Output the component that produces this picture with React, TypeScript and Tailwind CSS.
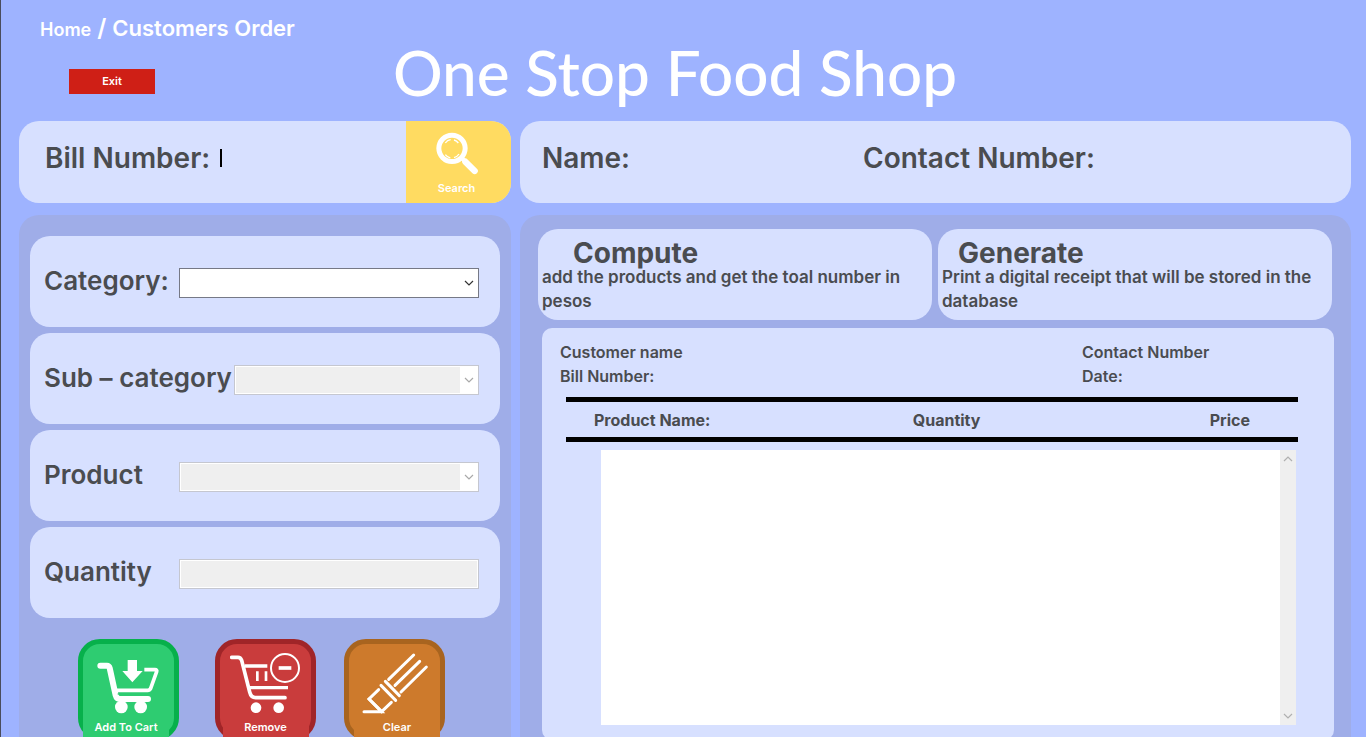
import React, { useState } from "react";

const ink = "text-[#4a4c50]";

function MagnifierIcon() {
  return (
    <svg viewBox="100 48 144 135" className="h-[45px] w-12 shrink-0" fill="none" stroke="#fff" aria-hidden="true">
      <circle cx="157" cy="100" r="39.5" strokeWidth="15" />
      <path d="M137 84q6-9 16-10M163 75q8 2 13 9M178 117q-6 9-15 11M152 129q-9-2-15-10" strokeWidth="4" />
      <path d="M186 129l11 11" strokeWidth="12" />
      <path d="M197 140l28 28" strokeWidth="19" strokeLinecap="round" />
    </svg>
  );
}

function AddCartIcon() {
  return (
    <svg viewBox="98 81 216 189" className="h-[63px] w-[72px] shrink-0" fill="none" stroke="#fff" strokeLinejoin="round" aria-hidden="true">
      <path d="M120 122h20q6 0 8 7l18 82q3 11 12 11h85" strokeWidth="18" strokeLinecap="round" />
      <path d="M170 196h92q6 0 9-6l18-50q2-6-5-6h-32" strokeWidth="11" />
      <path d="M172 207h94" strokeWidth="4" stroke="#2ecc71" />
      <path d="M202 105h28v33h17l-31 34-30-34h16z" fill="#fff" stroke="none" />
      <circle cx="183" cy="246" r="19" fill="#fff" stroke="none" />
      <circle cx="241" cy="246" r="19" fill="#fff" stroke="none" />
    </svg>
  );
}

function RemoveCartIcon() {
  return (
    <svg viewBox="510 81 216 189" className="h-[63px] w-[72px] shrink-0" fill="none" stroke="#fff" aria-hidden="true">
      <path d="M515 97h19q8 0 11 9l24 95q4 17 18 17h88" strokeWidth="11" strokeLinecap="round" />
      <path d="M554 123h68M569 188h115" strokeWidth="10" />
      <path d="M592 139v29M618 139v29" strokeWidth="8" />
      <circle cx="675" cy="129" r="42" strokeWidth="6" />
      <path d="M656 129h38" strokeWidth="11" />
      <circle cx="588" cy="248" r="16" fill="#fff" stroke="none" />
      <circle cx="656" cy="248" r="16" fill="#fff" stroke="none" />
    </svg>
  );
}

function BrushIcon() {
  return (
    <svg viewBox="897 81 216 189" className="h-[63px] w-[72px] shrink-0" fill="none" stroke="#fff" strokeWidth="9" strokeLinecap="round" aria-hidden="true">
      <path d="M986 163l75-73M1005 181l74-72M1023 201l76-75" />
      <path d="M963 181l44 45M976 169l42 43" />
      <path d="M956 194l-29 28 38 38 29-28" />
      <path d="M927 222l38 38h-53" />
    </svg>
  );
}

function ChevronIcon({ className }: { className: string }) {
  return (
    <svg viewBox="0 0 10 6" className={className} fill="none" stroke="currentColor" aria-hidden="true">
      <path d="M1 1l4 4 4-4" strokeWidth="1.2" />
    </svg>
  );
}

function FieldCard({ id, label, children }: { id: string; label: string; children: React.ReactNode }) {
  return (
    <div className="flex h-[91px] items-start rounded-[20px] bg-[#d7e0ff] pt-[29px] pr-[21px] pl-[14px]">
      <label htmlFor={id} className={`min-w-[135px] shrink-0 pr-0.5 text-[26px] leading-8 font-semibold whitespace-nowrap ${ink}`}>
        {label}
      </label>
      <div className="min-w-0 flex-1 pt-[3px]">{children}</div>
    </div>
  );
}

function SelectField({ id, disabled = false }: { id: string; disabled?: boolean }) {
  return (
    <div className="relative">
      <select
        id={id}
        disabled={disabled}
        className={
          disabled
            ? "block h-[30px] w-full appearance-none border border-[#c5c7d0] bg-[#efefef] opacity-100 shadow-[inset_0_0_0_1px_#fff]"
            : "block h-[30px] w-full appearance-none border border-[#767986] bg-white"
        }
      />
      <span
        className={
          disabled
            ? "pointer-events-none absolute inset-y-px right-px flex w-[18px] items-center justify-center bg-white text-[#a9a9a9]"
            : "pointer-events-none absolute inset-y-px right-px flex w-[18px] items-center justify-center bg-white text-[#333]"
        }
      >
        <ChevronIcon className="h-1.5 w-2.5" />
      </span>
    </div>
  );
}

function ActionButton({
  label,
  icon,
  frame,
  plate,
}: {
  label: string;
  icon: React.ReactNode;
  frame: string;
  plate: string;
}) {
  return (
    <button type="button" className={`flex h-[101px] w-[101px] shrink-0 flex-col items-center justify-start rounded-[22px] border-[5px] pt-2 text-white ${frame}`}>
      {icon}
      <span className={`block h-[25px] w-[86px] shrink-0 text-center text-[11px] leading-6 font-semibold ${plate}`}>{label}</span>
    </button>
  );
}

function InfoCard({ title, indent, text }: { title: string; indent: string; text: string }) {
  return (
    <section className="h-[91px] flex-1 rounded-[20px] bg-[#d7e0ff] px-1 pt-2">
      <h2 className={`text-[28px] leading-8 font-bold ${indent}`}>{title}</h2>
      <p className="-mt-1 text-[17px] leading-6 font-semibold">{text}</p>
    </section>
  );
}

export default function App() {
  const [bill, setBill] = useState("");
  return (
    <div className={`flex h-screen flex-col overflow-hidden border-l border-[#4a4c5c] bg-[#9eb3ff] font-['Inter','Open_Sans',sans-serif] ${ink}`}>
      <header className="grid h-[121px] shrink-0 grid-cols-[1fr_auto_1fr] pr-14 pl-[39px] text-white">
        <div className="pt-3">
          <nav className="flex h-8 items-baseline font-semibold whitespace-nowrap">
            <a href="#home" className="text-lg leading-8">Home</a>
            <span className="px-1.5 text-2xl leading-8">/</span>
            <a href="#orders" className="text-[22px] leading-8">Customers Order</a>
          </nav>
          <button type="button" className="mt-[25px] ml-[29px] block h-[25px] w-[86px] bg-[#cf1f16] text-[11px] font-semibold">
            Exit
          </button>
        </div>
        <h1 className="pt-9 font-['Lato',sans-serif] text-[62px] leading-[72px] font-medium whitespace-nowrap">One Stop Food Shop</h1>
      </header>

      <main className="grid min-h-0 flex-1 grid-cols-[492px_1fr] grid-rows-[82px_1fr] gap-x-[9px] gap-y-3 pr-[15px] pl-[18px]">
        <form className="flex overflow-hidden rounded-[20px] bg-[#d7e0ff]">
          <div className="flex min-w-0 flex-1 items-center pb-2 pl-[26px]">
            <label htmlFor="bill" className="text-[28px] leading-8 font-semibold whitespace-nowrap">Bill Number:</label>
            <span className="ml-2.5 h-[18px] w-0.5 shrink-0 bg-black" />
            <input id="bill" value={bill} onChange={(e) => setBill(e.target.value)} className="min-w-0 flex-1 bg-transparent text-xl outline-none" />
          </div>
          <button type="button" className="flex w-[105px] flex-col items-center bg-[#ffdb61] pt-2.5 pr-1 text-[11px] leading-6 font-semibold text-white">
            <MagnifierIcon />
            Search
          </button>
        </form>

        <div className="grid grid-cols-[321fr_488fr] items-center rounded-[20px] bg-[#d7e0ff] pb-2 pl-[22px] text-[28px] leading-8 font-semibold">
          <div className="flex min-w-0">
            <label htmlFor="name">Name:</label>
            <input id="name" className="min-w-0 flex-1 bg-transparent pl-2 text-xl outline-none" />
          </div>
          <div className="flex min-w-0">
            <label htmlFor="contact" className="whitespace-nowrap">Contact Number:</label>
            <input id="contact" className="min-w-0 flex-1 bg-transparent pl-2 text-xl outline-none" />
          </div>
        </div>

        <section className="flex flex-col gap-1.5 rounded-t-[20px] bg-[#9fade8] px-[11px] pt-[21px]">
          <FieldCard id="category" label="Category:">
            <SelectField id="category" />
          </FieldCard>
          <FieldCard id="subcategory" label="Sub – category">
            <SelectField id="subcategory" disabled />
          </FieldCard>
          <FieldCard id="product" label="Product">
            <SelectField id="product" disabled />
          </FieldCard>
          <FieldCard id="quantity" label="Quantity">
            <input id="quantity" disabled className="block h-[30px] w-full border border-[#c5c7d0] bg-[#efefef] px-2 shadow-[inset_0_0_0_1px_#fff]" />
          </FieldCard>
          <div className="grid grid-cols-[137px_129px_101px] pt-[15px] pl-12">
            <ActionButton label="Add To Cart" icon={<AddCartIcon />} frame="border-[#07b04b] bg-[#2ecc71]" plate="self-start bg-[#2ecc71]" />
            <ActionButton label="Remove" icon={<RemoveCartIcon />} frame="border-[#a02528] bg-[#c93c3c]" plate="bg-[#c93c3c]" />
            <ActionButton label="Clear" icon={<BrushIcon />} frame="border-[#a8641f] bg-[#cd7a2c]" plate="self-end bg-[#cd7a2c]" />
          </div>
        </section>

        <section className="flex min-w-0 flex-col rounded-t-[20px] bg-[#9fade8] pt-3.5 pr-[17px] pl-[18px]">
          <div className="flex gap-1.5 pr-0.5">
            <InfoCard title="Compute" indent="pl-[31px]" text="add the products and get the toal number in pesos" />
            <InfoCard title="Generate" indent="pl-4" text="Print a digital receipt that will be stored in the database" />
          </div>

          <div className="mt-2 ml-1 flex flex-1 flex-col rounded-[10px] bg-[#d7e0ff] pt-3 pb-[15px]">
            <div className="grid grid-cols-[522fr_252fr] pl-[18px] text-base leading-6 font-semibold">
              <span>Customer name</span>
              <span>Contact Number</span>
              <span>Bill Number:</span>
              <span>Date:</span>
            </div>
            <div className="mt-[9px] flex flex-1 flex-col pr-9 pl-6">
              <table className="h-[45px] w-full table-fixed border-y-[5px] border-black text-base font-semibold">
                <thead>
                  <tr>
                    <th className="w-[43%] pl-7 text-left">Product Name:</th>
                    <th className="w-[35%] pl-8 text-left">Quantity</th>
                    <th className="pr-12 text-right">Price</th>
                  </tr>
                </thead>
              </table>
              <div className="mt-2 mr-0.5 ml-[35px] flex flex-1 bg-white">
                <textarea readOnly aria-label="Receipt" className="block flex-1 resize-none overflow-hidden p-2 outline-none" />
                <div className="flex w-4 flex-col items-center justify-between bg-[#efefef] py-1.5 text-[#b0b0b0]">
                  <ChevronIcon className="h-1.5 w-2.5 rotate-180" />
                  <ChevronIcon className="h-1.5 w-2.5" />
                </div>
              </div>
            </div>
          </div>
        </section>
      </main>
    </div>
  );
}
